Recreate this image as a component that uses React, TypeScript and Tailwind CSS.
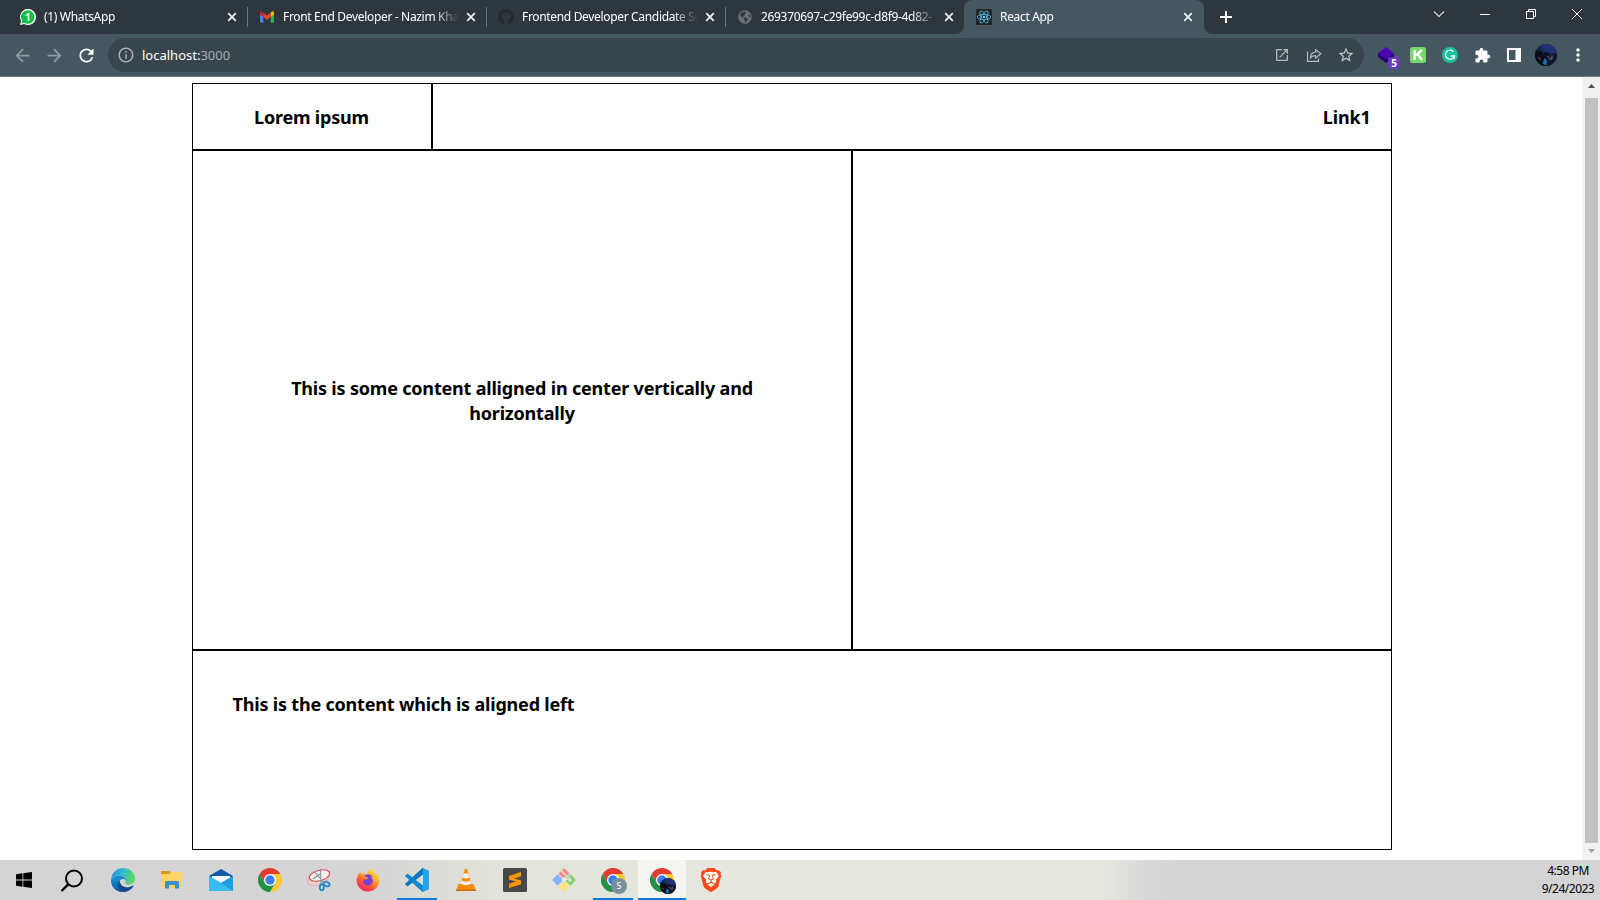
import type { ReactNode } from "react";
import {
  MdArrowBack,
  MdArrowForward,
  MdRefresh,
  MdInfoOutline,
  MdOpenInNew,
  MdStarBorder,
  MdExtension,
  MdMoreVert,
} from "react-icons/md";
import { FaGithub, FaFirefoxBrowser, FaGlobeAmericas } from "react-icons/fa";
import { SiBrave } from "react-icons/si";

/* ---------- tab strip ---------- */

function WhatsAppIcon() {
  return (
    <svg width="16" height="16" viewBox="0 0 16 16">
      <path d="M0 16 L1.1 12 A8 8 0 1 1 4.2 15 Z" fill="#fff" />
      <path d="M1.4 14.6 L2.2 11.8 A6.7 6.7 0 1 1 4.4 13.8 Z" fill="#0bc245" />
      <text x="7.9" y="11.5" fontSize="10" fontWeight="700" fill="#fff" textAnchor="middle" fontFamily="Noto Sans, sans-serif">
        1
      </text>
    </svg>
  );
}

function GmailIcon() {
  return (
    <svg width="16" height="16" viewBox="0 0 16 16">
      <path d="M1 4 v8.8 q0 1 1 1 h2.3 V6.5 Z" fill="#4285f4" />
      <path d="M15 4 v8.8 q0 1 -1 1 h-2.3 V6.5 Z" fill="#34a853" />
      <path d="M11.7 3.6 L13 2.6 q2 -1 2 1.2 v1.6 L11.7 7.9 Z" fill="#fbbc04" />
      <path d="M4.3 3.6 L3 2.6 q-2 -1 -2 1.2 v1.6 L4.3 7.9 Z" fill="#c5221f" />
      <path d="M4.3 3.6 L8 6.4 L11.7 3.6 V7.9 L8 10.7 L4.3 7.9 Z" fill="#ea4335" />
    </svg>
  );
}

function ReactIcon() {
  return (
    <svg width="16" height="16" viewBox="0 0 16 16">
      <rect width="16" height="16" rx="1.5" fill="#222426" />
      <g fill="none" stroke="#53c1de" strokeWidth="0.8">
        <ellipse cx="8" cy="8" rx="6.8" ry="2.6" />
        <ellipse cx="8" cy="8" rx="6.8" ry="2.6" transform="rotate(60 8 8)" />
        <ellipse cx="8" cy="8" rx="6.8" ry="2.6" transform="rotate(120 8 8)" />
      </g>
      <circle cx="8" cy="8" r="1.3" fill="#61dafb" />
    </svg>
  );
}

function CloseGlyph() {
  return (
    <svg width="16" height="16" viewBox="0 0 16 16" stroke="#f1f3f4" strokeWidth="1.7">
      <path d="M4.2 4.2 L11.8 11.8 M11.8 4.2 L4.2 11.8" />
    </svg>
  );
}

type TabProps = { icon: ReactNode; title: string; active?: boolean; divider?: boolean };

function Tab({ icon, title, active, divider }: TabProps) {
  return (
    <div
      className={
        active
          ? "relative flex h-[34px] w-[240px] items-center rounded-t-lg bg-[#455761] pl-3"
          : "relative flex h-[34px] w-[239px] items-center pl-3"
      }
    >
      {divider && <span className="absolute top-[7px] left-0 h-5 w-px bg-[#68747b]" />}
      {active && (
        <>
          <svg className="absolute bottom-0 -left-2" width="8" height="8">
            <path d="M8 0 V8 H0 A8 8 0 0 0 8 0 Z" fill="#455761" />
          </svg>
          <svg className="absolute -right-2 bottom-0" width="8" height="8">
            <path d="M0 0 V8 H8 A8 8 0 0 1 0 0 Z" fill="#455761" />
          </svg>
        </>
      )}
      <span className="flex size-4 shrink-0 items-center justify-center">{icon}</span>
      <span className="ml-2 w-[177px] text-[12px] leading-4 tracking-[-0.33px] whitespace-nowrap text-white [mask-image:linear-gradient(to_right,#000_150px,transparent_176px)]">
        {title}
      </span>
      <span className="ml-[3px] flex">
        <CloseGlyph />
      </span>
    </div>
  );
}

function TabStrip() {
  return (
    <div className="flex h-[34px] bg-[#2d373d] pl-2">
      <Tab icon={<WhatsAppIcon />} title="(1) WhatsApp" />
      <Tab icon={<GmailIcon />} title="Front End Developer - Nazim Kha" divider />
      <Tab icon={<FaGithub size={16} color="#24292f" />} title="Frontend Developer Candidate Sc" divider />
      <Tab icon={<FaGlobeAmericas size={14} color="#6b6f73" />} title="269370697-c29fe99c-d8f9-4d82-" divider />
      <Tab icon={<ReactIcon />} title="React App" active />
      <svg className="mt-[9px] ml-[14px]" width="16" height="16" stroke="#fff" strokeWidth="2">
        <path d="M2 8 H14 M8 2 V14" />
      </svg>
      <div className="ml-auto flex h-7 items-center text-white">
        <div className="flex w-[46px] justify-center">
          <svg width="12" height="12" fill="none" stroke="#d9dcde" strokeWidth="1.1">
            <path d="M1 3.5 L6 8.5 L11 3.5" />
          </svg>
        </div>
        <div className="flex w-[46px] justify-center">
          <svg width="10" height="10" stroke="#fff">
            <path d="M0 5.5 H10" />
          </svg>
        </div>
        <div className="flex w-[46px] justify-center">
          <svg width="10" height="10" fill="none" stroke="#fff">
            <path d="M0.5 2.5 H7.5 V9.5 H0.5 Z M2.5 2.5 V0.5 H9.5 V7.5 H7.5" />
          </svg>
        </div>
        <div className="flex w-[46px] justify-center">
          <svg width="10" height="10" stroke="#fff">
            <path d="M0 0 L10 10 M10 0 L0 10" />
          </svg>
        </div>
      </div>
    </div>
  );
}

/* ---------- toolbar ---------- */

function Slot({ children }: { children: ReactNode }) {
  return <div className="flex w-8 items-center justify-center">{children}</div>;
}

function ShareIcon() {
  return (
    <svg width="16" height="16" viewBox="0 0 16 16" fill="none" stroke="#b4b9bd" strokeWidth="1.2">
      <path d="M1.5 4.5 V14.4 H12.5 V11.5" />
      <path d="M9.6 2.6 L14.8 6.8 L9.6 11 V8.7 C7 8.6 5.4 9.4 4.2 11.2 C4.5 7.8 6.4 5.3 9.6 4.9 Z" strokeLinejoin="round" />
    </svg>
  );
}

function Avatar({ size }: { size: number }) {
  return (
    <svg width={size} height={size} viewBox="0 0 22 22">
      <defs>
        <clipPath id="avatar-round">
          <circle cx="11" cy="11" r="11" />
        </clipPath>
      </defs>
      <g clipPath="url(#avatar-round)">
        <rect width="22" height="22" fill="#1b2858" />
        <path d="M3 0 H22 V9 H11 L8 4 Z" fill="#213372" />
        <path d="M0 7 Q5 5 8 9 L11 13 L10 22 H0 Z" fill="#0b0d17" />
        <path d="M10 10 H22 V22 H11 Z" fill="#12162a" />
        <path d="M7.5 20 L9.5 14 L12 17 L11.5 21 Z" fill="#1976ad" />
        <path d="M3 13.5 L6 15.5" stroke="#a0457c" strokeWidth="1" />
        <path d="M12.5 12 L15 14.5 M17 11.5 V15 H14.5" stroke="#7b84a0" strokeWidth="1" fill="none" />
        <path d="M9 9.5 H14" stroke="#0a0f26" strokeWidth="2" />
      </g>
    </svg>
  );
}

function Toolbar() {
  return (
    <div className="flex h-[43px] items-center border-b border-[#6a7881] bg-[#455761] pl-1.5">
      <Slot>
        <MdArrowBack size={21} color="#8f9ba1" />
      </Slot>
      <Slot>
        <MdArrowForward size={21} color="#8f9ba1" />
      </Slot>
      <Slot>
        <MdRefresh size={21} color="#fff" />
      </Slot>
      <div className="ml-1.5 flex h-[34px] w-[1256px] items-center rounded-full bg-[#38454d] pl-[9px]">
        <MdInfoOutline size={18} color="#aab1b5" />
        <span className="ml-[7px] text-[13px] leading-4 text-white">
          localhost:<span className="text-[#a5acb0]">3000</span>
        </span>
        <div className="ml-auto flex pr-0.5">
          <Slot>
            <MdOpenInNew size={16} color="#b4b9bd" />
          </Slot>
          <Slot>
            <ShareIcon />
          </Slot>
          <Slot>
            <MdStarBorder size={18} color="#c3c8cb" />
          </Slot>
        </div>
      </div>
      <div className="ml-1.5 flex">
        <Slot>
          <span className="relative flex">
            <svg width="18" height="18" viewBox="0 0 18 18">
              <path d="M1 7 V11 L9 17 L17 11 V7 Z" fill="#24046b" />
              <path d="M9 1 L17 7.2 L9 13.4 L1 7.2 Z" fill="#4a05b4" />
            </svg>
            <span className="absolute top-[11px] left-[11px] flex h-3 w-3 items-center justify-center rounded-xs bg-[#673ab7] text-[10px] leading-3 font-bold text-white">
              5
            </span>
          </span>
        </Slot>
        <Slot>
          <svg width="16" height="16">
            <rect width="16" height="16" rx="2.5" fill="#77d868" />
            <path d="M4.7 3 V13 M11.8 3 L6 8.3 M7.5 7 L12 13" stroke="#fff" strokeWidth="2.5" fill="none" />
          </svg>
        </Slot>
        <Slot>
          <svg width="16" height="16">
            <circle cx="8" cy="8" r="8" fill="#15c39a" />
            <path d="M11.5 4.6 A4.6 4.6 0 1 0 12.5 9 H8.8 M12.4 8.6 L12 12" stroke="#fff" strokeWidth="1.3" fill="none" />
          </svg>
        </Slot>
        <Slot>
          <MdExtension size={17} color="#fff" />
        </Slot>
        <Slot>
          <svg width="14" height="14">
            <path d="M0 0 H14 V14 H0 Z M2 2 V12 H8.5 V2 Z" fill="#fff" fillRule="evenodd" />
          </svg>
        </Slot>
        <Slot>
          <Avatar size={22} />
        </Slot>
        <Slot>
          <MdMoreVert size={20} color="#fff" />
        </Slot>
      </div>
    </div>
  );
}

/* ---------- page ---------- */

function Page() {
  return (
    <div className="flex h-[783px] bg-white">
      <main className="flex-1 pt-1.5 pl-[192px] text-[18px] leading-[25px] font-bold tracking-[-0.19px] text-black">
        <div className="w-[1200px]">
          <header className="flex h-[67px]">
            <div className="flex w-60 items-center justify-center border border-black pt-px pr-px">Lorem ipsum</div>
            <div className="flex flex-1 items-center justify-end border border-black pt-px pr-[20.5px]">Link1</div>
          </header>
          <section className="flex h-[500px]">
            <div className="flex w-[660px] items-center justify-center border border-black px-20 pt-px text-center">
              This is some content alligned in center vertically and horizontally
            </div>
            <div className="flex-1 border border-black" />
          </section>
          <footer className="h-[200px] border border-black pt-[41px] pl-[39.5px]">
            This is the content which is aligned left
          </footer>
        </div>
      </main>
      <div className="flex w-[17px] flex-col items-center bg-[#f1f1f1]">
        <svg width="17" height="21">
          <path d="M5 11 L8.5 7 L12 11 Z" fill="#505050" />
        </svg>
        <div className="w-[13px] flex-1 bg-[#c1c1c1]" />
        <svg width="17" height="17">
          <path d="M5 6 L8.5 10 L12 6 Z" fill="#a3a3a3" />
        </svg>
      </div>
    </div>
  );
}

/* ---------- taskbar ---------- */

function EdgeIcon() {
  return (
    <svg width="24" height="24" viewBox="0 0 24 24">
      <defs>
        <linearGradient id="edge-top" x1="0" y1="0.3" x2="1" y2="0.5">
          <stop offset="0" stopColor="#1c93dc" />
          <stop offset="0.5" stopColor="#35bfd0" />
          <stop offset="1" stopColor="#62d957" />
        </linearGradient>
        <linearGradient id="edge-left" x1="0" y1="0" x2="0.3" y2="1">
          <stop offset="0" stopColor="#1b9de2" />
          <stop offset="1" stopColor="#0c59a4" />
        </linearGradient>
      </defs>
      <path d="M0.2 11 C1 4 6 0 12 0 C19 0 24 5 24 10.5 C24 14.5 21 16.5 17.5 16.5 C14.5 16.5 13.8 15.3 14.3 14.5 C15.5 12.5 14.5 8.5 9.5 7.6 C5 7 1.5 8.500 0.2 11 Z" fill="url(#edge-top)" />
      <path d="M0.1 11.5 C1.5 8.5 5 7 9 7.5 C12.5 8 14.8 10.3 14.8 12.3 C13.5 10.5 10.3 10.5 8.6 13 C6.7 16 9 21.5 14.5 22.8 C13 23.8 11 24 10 23.9 C3.5 22.8 -0.5 17.5 0.1 11.5 Z" fill="url(#edge-left)" />
      <path d="M8.8 12.5 C8.6 17 13 19.8 17 19.3 C19.2 19 20.6 18.3 22 17.6 C22.6 17.3 22.7 17.7 22.4 18.2 C20 22 16.5 24 12.5 24 C7 22 5.5 16 8.8 12.5 Z" fill="#114a8b" />
    </svg>
  );
}

function ExplorerIcon() {
  return (
    <svg width="22" height="20" viewBox="0 0 22 20">
      <path d="M0 1 H8.5 L10 2.5 V6 H0 Z" fill="#d69a17" />
      <path d="M0 4 H8.5 L10.5 2 H21 V18 H0 Z" fill="#fdd567" />
      <path d="M4 18 V12.5 Q4 11 5.5 11 H16.5 Q18 11 18 12.5 V18.5 H14 V15 H8 V18.5 H4 Z" fill="#3a8fd0" />
    </svg>
  );
}

function MailIcon() {
  return (
    <svg width="24" height="24" viewBox="0 0 24 24">
      <path d="M0 8 L12 1 L24 8 V14 H0 Z" fill="#1259a8" />
      <path d="M3 8 H21 V14 L12 18 L3 14 Z" fill="#f4f6f8" />
      <path d="M0 8 L12 15.5 L24 8 V23 H0 Z" fill="#1fa4e6" />
      <path d="M24 8 L12 14.8 L24 23 Z" fill="#1f9fe2" />
      <path d="M0 8 L12 14.8 L24 23 H0 Z" fill="#38bdf3" />
    </svg>
  );
}

function ChromeIcon() {
  return (
    <svg width="24" height="24" viewBox="0 0 48 48">
      <path d="M24 12 H44.8 A24 24 0 0 1 24 48 L34.4 30 Z" fill="#fcc934" />
      <path d="M34.4 30 L24 48 A24 24 0 0 1 3.2 12 L13.6 30 Z" fill="#229342" />
      <path d="M3.2 12 A24 24 0 0 1 44.8 12 H24 L13.6 30 Z" fill="#e33b2e" />
      <circle cx="24" cy="24" r="12" fill="#fff" />
      <circle cx="24" cy="24" r="9.5" fill="#3a7ff0" />
    </svg>
  );
}

function SnipIcon() {
  return (
    <svg width="26" height="24" viewBox="0 0 26 24" fill="none">
      <ellipse cx="12" cy="11" rx="11" ry="6" transform="rotate(-18 12 11)" fill="#dfd2d2" stroke="#eba9a9" />
      <ellipse cx="13.5" cy="7.5" rx="10.5" ry="5.2" transform="rotate(-15 13.5 7.5)" fill="#f0f0f0" stroke="#e04848" strokeWidth="1.2" />
      <path d="M9 4 L17 14 M14.5 1.5 L15 16 M7 11 L14 6" stroke="#8d9094" strokeWidth="1.1" />
      <ellipse cx="15.8" cy="19.3" rx="2" ry="3" stroke="#2487c8" strokeWidth="1.8" />
      <ellipse cx="20.5" cy="16" rx="3.2" ry="2" transform="rotate(25 20.5 16)" stroke="#2487c8" strokeWidth="1.8" />
    </svg>
  );
}

function FirefoxIcon() {
  return (
    <span className="relative flex size-6 items-center justify-center">
      <svg width="24" height="24" viewBox="0 0 24 24" className="absolute inset-0">
        <defs>
          <linearGradient id="fox" x1="0.8" y1="0" x2="0.2" y2="1">
            <stop offset="0" stopColor="#fff044" />
            <stop offset="0.35" stopColor="#ffb02e" />
            <stop offset="0.65" stopColor="#ff5a36" />
            <stop offset="1" stopColor="#ee1b79" />
          </linearGradient>
        </defs>
        <circle cx="12" cy="13" r="7" fill="#7a3fd4" />
      </svg>
      <FaFirefoxBrowser size={24} className="relative" fill="url(#fox)" />
    </span>
  );
}

function VsCodeIcon() {
  return (
    <svg width="24" height="24" viewBox="0 0 24 24">
      <path d="M17.5 0 L24 3 V7 L18 6.5 L3 18 Q2.4 18.4 1.8 18 L0.3 16.6 Q-0.2 16 0.4 15.4 Z" fill="#0d74bd" />
      <path d="M17.5 24 L24 21 V17 L18 17.5 L3 6 Q2.4 5.6 1.8 6 L0.3 7.4 Q-0.2 8 0.4 8.6 Z" fill="#1388ce" />
      <path d="M17.5 24 Q18 23.5 18 22.5 V1.5 Q18 0.5 17.5 0 L23 2.5 Q24 3 24 4 V20 Q24 21 23 21.5 Z" fill="#26a5ef" />
    </svg>
  );
}

function VlcIcon() {
  return (
    <svg width="24" height="24" viewBox="0 0 24 24">
      <path d="M4.5 16 H19.5 L22 22.5 H2 Z" fill="#f08a10" />
      <path d="M2 21.5 H22 V23 H2 Z" fill="#c96a08" />
      <path d="M10.7 1 H13.3 L18 18 Q12 21.5 6 18 Z" fill="#f48c12" />
      <path d="M9.5 5.5 H14.5 L15.7 9.5 Q12 11.5 8.3 9.5 Z" fill="#f1f1f1" />
      <path d="M7.5 12.5 Q12 14.8 16.5 12.5 L17.3 15.7 Q12 18.5 6.7 15.7 Z" fill="#f1f1f1" />
    </svg>
  );
}

function SublimeIcon() {
  return (
    <svg width="24" height="24" viewBox="0 0 24 24">
      <rect width="24" height="24" rx="1.5" fill="#484848" />
      <path d="M6 8 L18 4 V8.3 L11 10.5 L18 12.5 V16.2 L6 20 V15.8 L13 13.6 L6 11.6 Z" fill="#ff9800" />
    </svg>
  );
}

function GitIcon() {
  return (
    <svg width="24" height="24" viewBox="0 0 24 24">
      <path d="M12 0 L17.5 5.5 L12 11 L6.5 5.5 Z" fill="#f58a8a" />
      <path d="M5.7 6.3 L11.4 12 L5.7 17.7 L0 12 Z" fill="#86b3fa" />
      <path d="M18.3 6.3 L24 12 L18.3 17.7 L12.6 12 Z" fill="#84d06c" />
      <path d="M12 13 L17.5 18.5 L12 24 L6.5 18.5 Z" fill="#fbe183" />
      <path d="M9 2.5 L15 8.5 M14 12 L18 9" stroke="#e7e8e0" strokeWidth="1.2" />
      <circle cx="12" cy="11.5" r="2.2" fill="#e7e8e0" />
      <circle cx="18" cy="12" r="1.7" fill="#e7e8e0" />
    </svg>
  );
}

function BraveIcon() {
  return (
    <span className="relative flex size-6 items-center justify-center">
      <svg width="24" height="24" viewBox="0 0 24 24" className="absolute inset-0">
        <path d="M6 4 H18 L19 12 L16 19 L12 21.5 L8 19 L5 12 Z" fill="#fff" />
      </svg>
      <SiBrave size={24} color="#fb4a1c" className="relative" />
    </span>
  );
}

type AppState = "idle" | "open" | "focused";

function TaskItem({ children, state = "idle" }: { children: ReactNode; state?: AppState }) {
  return (
    <div
      className={
        state === "focused"
          ? "relative mr-px flex h-10 w-12 items-center justify-center bg-[#f5f6f1]"
          : "relative mr-px flex h-10 w-12 items-center justify-center"
      }
    >
      {children}
      {state === "open" && <div className="absolute bottom-0 left-1 h-0.5 w-10 bg-[#0a7bdc]" />}
      {state === "focused" && <div className="absolute bottom-0 left-0 h-0.5 w-12 bg-[#0a7bdc]" />}
    </div>
  );
}

function ProfileBadge({ children }: { children: ReactNode }) {
  return (
    <span className="relative flex">
      <ChromeIcon />
      <span className="absolute top-2.5 left-2.5 flex size-4 items-center justify-center">{children}</span>
    </span>
  );
}

function Taskbar() {
  return (
    <div className="flex h-10 bg-[linear-gradient(to_right,#d4d4d4_0px,#d5d5d5_370px,#e2e3da_500px,#e5e7de_700px,#e6e8df_1100px,#d9d9d8_1145px,#d4d4d4_1180px)]">
      <div className="flex w-12 items-center justify-center">
        <svg width="16" height="16" fill="#000">
          <path d="M0 2.2 L6.5 1.3 V7.5 H0 Z M7.3 1.2 L16 0 V7.5 H7.3 Z M0 8.4 H6.5 V14.7 L0 13.8 Z M7.3 8.4 H16 V16 L7.3 14.8 Z" />
        </svg>
      </div>
      <div className="mr-[3px] flex w-12 items-center justify-center">
        <svg width="24" height="23" fill="none" stroke="#000" strokeWidth="2">
          <circle cx="14" cy="9.5" r="8" />
          <path d="M8.5 15.2 L1.5 22" strokeWidth="2.4" />
        </svg>
      </div>
      <TaskItem>
        <EdgeIcon />
      </TaskItem>
      <TaskItem>
        <ExplorerIcon />
      </TaskItem>
      <TaskItem>
        <MailIcon />
      </TaskItem>
      <TaskItem>
        <ChromeIcon />
      </TaskItem>
      <TaskItem>
        <SnipIcon />
      </TaskItem>
      <TaskItem>
        <FirefoxIcon />
      </TaskItem>
      <TaskItem state="open">
        <VsCodeIcon />
      </TaskItem>
      <TaskItem>
        <VlcIcon />
      </TaskItem>
      <TaskItem>
        <SublimeIcon />
      </TaskItem>
      <TaskItem>
        <GitIcon />
      </TaskItem>
      <TaskItem state="open">
        <ProfileBadge>
          <span className="flex size-4 items-center justify-center rounded-full bg-[#78909c] text-[9px] leading-4 text-white">
            S
          </span>
        </ProfileBadge>
      </TaskItem>
      <TaskItem state="focused">
        <ProfileBadge>
          <Avatar size={16} />
        </ProfileBadge>
      </TaskItem>
      <TaskItem>
        <BraveIcon />
      </TaskItem>
      <div className="ml-auto flex w-[64px] flex-col items-center pt-[2px] text-[12px] leading-[18px] tracking-[-0.5px] text-black">
        <span>4:58 PM</span>
        <span>9/24/2023</span>
      </div>
    </div>
  );
}

export default function App() {
  return (
    <div className="h-[900px] w-[1600px] overflow-hidden font-['Noto_Sans','Open_Sans',sans-serif]">
      <TabStrip />
      <Toolbar />
      <Page />
      <Taskbar />
    </div>
  );
}
